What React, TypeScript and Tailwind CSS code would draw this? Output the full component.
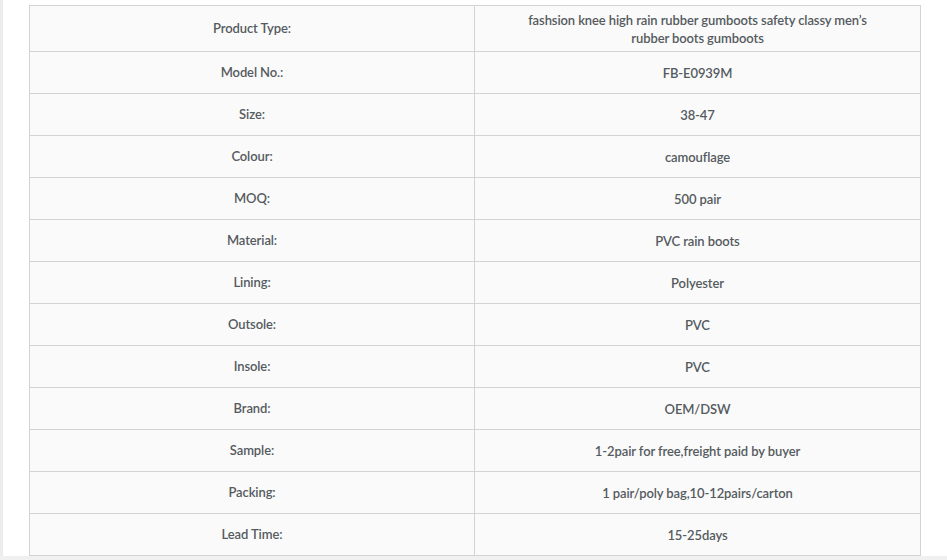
const rows: [string, string][] = [
  ['Product Type:', 'fashsion knee high rain rubber gumboots safety classy men’s rubber boots gumboots'],
  ['Model No.:', 'FB-E0939M'],
  ['Size:', '38-47'],
  ['Colour:', 'camouflage'],
  ['MOQ:', '500 pair'],
  ['Material:', 'PVC rain boots'],
  ['Lining:', 'Polyester'],
  ['Outsole:', 'PVC'],
  ['Insole:', 'PVC'],
  ['Brand:', 'OEM/DSW'],
  ['Sample:', '1-2pair for free,freight paid by buyer'],
  ['Packing:', '1 pair/poly bag,10-12pairs/carton'],
  ['Lead Time:', '15-25days'],
];

export default function App() {
  return (
    <div className="w-[947px] h-[560px] overflow-hidden bg-white flex flex-col" style={{ fontFamily: 'Lato, "Noto Sans", sans-serif' }}>
      <div className="flex h-[556px]">
        {/* faint strip on the far left */}
        <div className="w-[3px] bg-[#ececec]" />
        <div className="flex-1 pl-[26px] pt-[5px]">
          <table className="w-[892px] table-fixed border-collapse bg-[#fafafa] text-[13px] tracking-[-0.1px] font-semibold text-[#555a60] text-center">
            <tbody>
              {rows.map(([label, value], i) => (
                <tr key={label} className={i === 0 ? 'h-[46px]' : 'h-[42px]'}>
                  <td className="w-[445px] border border-[#d3d3d3] p-0">{label}</td>
                  <td className="border border-[#d3d3d3] p-0 leading-[18px] whitespace-nowrap">
                    {i === 0 ? (
                      <>
                        fashsion knee high rain rubber gumboots safety classy men’s
                        <br />
                        rubber boots gumboots
                      </>
                    ) : (
                      value
                    )}
                  </td>
                </tr>
              ))}
            </tbody>
          </table>
        </div>
      </div>
      <div className="flex-1 bg-[#f0f0f0]" />
    </div>
  );
}
